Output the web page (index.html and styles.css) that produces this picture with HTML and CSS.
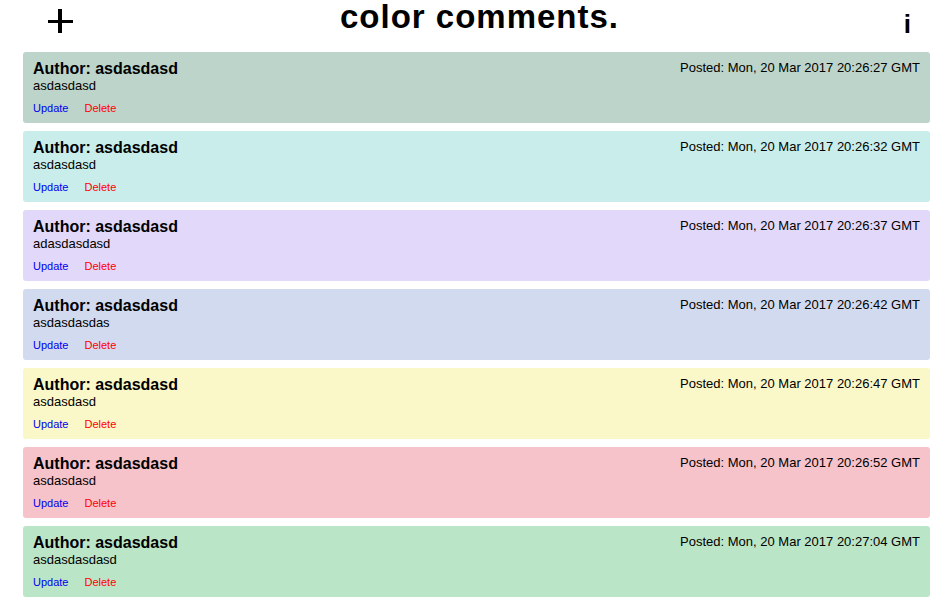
FILE: index.html
```html
<!DOCTYPE html>
<html>
<head>
<meta charset="utf-8">
<link rel="stylesheet" href="styles.css">
</head>
<body>
<header class="topbar">
  <span class="add-btn" aria-label="add">
    <svg width="25" height="24" viewBox="0 0 25 24"><rect x="10" y="0" width="4" height="24" fill="#000"/><rect x="0" y="11" width="25" height="3" fill="#000"/></svg>
  </span>
  <h1 class="title">color comments.</h1>
  <span class="info-btn">i</span>
</header>
<main class="list">
  <div class="card c1">
    <div class="left"><h3 class="author">Author: asdasdasd</h3><p class="body">asdasdasd</p><div class="actions"><a class="upd">Update</a><a class="del">Delete</a></div></div>
    <div class="posted">Posted: Mon, 20 Mar 2017 20:26:27 GMT</div>
  </div>
  <div class="card c2">
    <div class="left"><h3 class="author">Author: asdasdasd</h3><p class="body">asdasdasd</p><div class="actions"><a class="upd">Update</a><a class="del">Delete</a></div></div>
    <div class="posted">Posted: Mon, 20 Mar 2017 20:26:32 GMT</div>
  </div>
  <div class="card c3">
    <div class="left"><h3 class="author">Author: asdasdasd</h3><p class="body">adasdasdasd</p><div class="actions"><a class="upd">Update</a><a class="del">Delete</a></div></div>
    <div class="posted">Posted: Mon, 20 Mar 2017 20:26:37 GMT</div>
  </div>
  <div class="card c4">
    <div class="left"><h3 class="author">Author: asdasdasd</h3><p class="body">asdasdasdas</p><div class="actions"><a class="upd">Update</a><a class="del">Delete</a></div></div>
    <div class="posted">Posted: Mon, 20 Mar 2017 20:26:42 GMT</div>
  </div>
  <div class="card c5">
    <div class="left"><h3 class="author">Author: asdasdasd</h3><p class="body">asdasdasd</p><div class="actions"><a class="upd">Update</a><a class="del">Delete</a></div></div>
    <div class="posted">Posted: Mon, 20 Mar 2017 20:26:47 GMT</div>
  </div>
  <div class="card c6">
    <div class="left"><h3 class="author">Author: asdasdasd</h3><p class="body">asdasdasd</p><div class="actions"><a class="upd">Update</a><a class="del">Delete</a></div></div>
    <div class="posted">Posted: Mon, 20 Mar 2017 20:26:52 GMT</div>
  </div>
  <div class="card c7">
    <div class="left"><h3 class="author">Author: asdasdasd</h3><p class="body">asdasdasdasd</p><div class="actions"><a class="upd">Update</a><a class="del">Delete</a></div></div>
    <div class="posted">Posted: Mon, 20 Mar 2017 20:27:04 GMT</div>
  </div>
</main>
</body>
</html>
```

FILE: styles.css
```css
html, body {
  margin: 0;
  padding: 0;
  background: #fff;
  font-family: "Liberation Sans", Arial, sans-serif;
  color: #000;
}
.topbar {
  height: 52px;
  display: grid;
  grid-template-columns: 1fr auto 1fr;
  align-items: start;
  padding: 0 38px 0 48px;
  box-sizing: border-box;
}
.add-btn {
  display: block;
  width: 25px;
  height: 24px;
  margin-top: 9px;
  justify-self: start;
}
.add-btn svg { display: block; }
.title {
  margin: 0;
  font-size: 33px;
  line-height: 33px;
  font-weight: bold;
  letter-spacing: 1px;
}
.info-btn {
  justify-self: end;
  font-size: 26px;
  font-weight: bold;
  line-height: 26px;
  margin-top: 11px;
}
.list {
  display: flex;
  flex-direction: column;
  gap: 8px;
  padding: 0 19px 0 23px;
}
.card {
  display: flex;
  justify-content: space-between;
  align-items: flex-start;
  border-radius: 3px;
  padding: 7px 10px 0 10px;
  height: 71px;
  box-sizing: border-box;
}
.author {
  margin: 0;
  font-size: 16px;
  line-height: 19px;
  font-weight: bold;
}
.body {
  margin: 0;
  font-size: 13px;
  line-height: 15px;
}
.actions {
  margin-top: 9px;
  font-size: 11px;
  line-height: 13px;
  display: flex;
  gap: 16px;
}
.upd { color: #0000ee; }
.del { color: #ff0000; }
.posted {
  font-size: 13px;
  line-height: 15px;
  margin-top: 1px;
}
.c1 { background: #bcd4c9; }
.c2 { background: #c8edea; }
.c3 { background: #e2d8fa; }
.c4 { background: #d2daef; }
.c5 { background: #faf7c8; }
.c6 { background: #f6c3cb; }
.c7 { background: #bbe5c7; }
```
